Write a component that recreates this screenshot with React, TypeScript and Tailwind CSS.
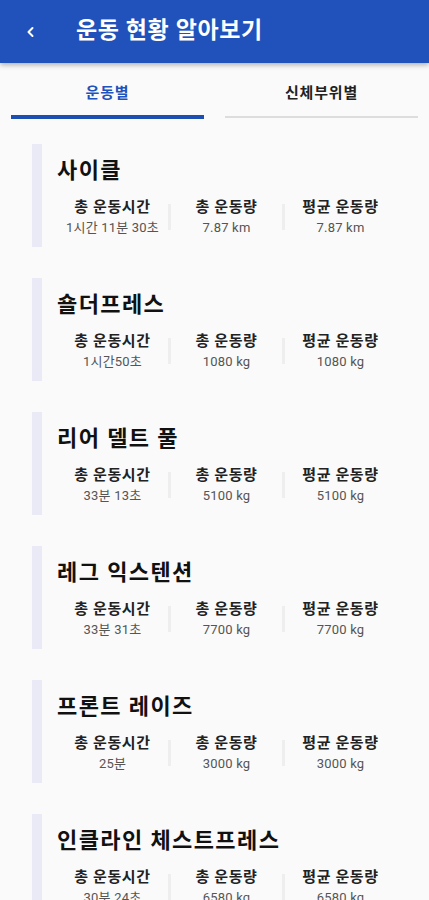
import React, { useState } from 'react';

type Exercise = {
  name: string;
  time: string;
  total: string;
  avg: string;
};

const exercises: Exercise[] = [
  { name: '사이클', time: '1시간 11분 30초', total: '7.87 km', avg: '7.87 km' },
  { name: '숄더프레스', time: '1시간50초', total: '1080 kg', avg: '1080 kg' },
  { name: '리어 델트 풀', time: '33분 13초', total: '5100 kg', avg: '5100 kg' },
  { name: '레그 익스텐션', time: '33분 31초', total: '7700 kg', avg: '7700 kg' },
  { name: '프론트 레이즈', time: '25분', total: '3000 kg', avg: '3000 kg' },
  { name: '인클라인 체스트프레스', time: '30분 24초', total: '6580 kg', avg: '6580 kg' },
];

const font = { fontFamily: 'Roboto, "Noto Sans CJK KR", "Noto Sans", sans-serif' };

const Stat = ({ label, value }: { label: string; value: string }) => (
  <div className="w-[111px] flex flex-col items-center">
    <p className="text-[15px] leading-[20px] font-bold tracking-[0.6px] text-[#222222] whitespace-nowrap">{label}</p>
    <p className="text-[13px] leading-[18px] mt-[2px] tracking-[0.2px] text-[#555555] whitespace-nowrap">{value}</p>
  </div>
);

const Divider = () => <div className="w-[3px] h-[26px] self-center bg-[#eeeeee]" />;

const ExerciseCard = ({ item }: { item: Exercise }) => (
  <div className="flex">
    <div className="w-[10px] bg-[#e9eaf6]" />
    <div className="pl-[15px] pt-[13px] pb-[10px]">
      <h2 className="text-[22px] leading-[28px] font-bold tracking-[1.4px] text-[#111111]">{item.name}</h2>
      <div className="flex mt-[12px]">
        <Stat label="총 운동시간" value={item.time} />
        <Divider />
        <Stat label="총 운동량" value={item.total} />
        <Divider />
        <Stat label="평균 운동량" value={item.avg} />
      </div>
    </div>
  </div>
);

export default function App() {
  const [tab, setTab] = useState(0);
  const tabs = ['운동별', '신체부위별'];

  return (
    <div className="min-h-[900px] w-[429px] bg-[#fafafa] overflow-hidden" style={font}>
      <header className="h-[63px] bg-[#2152bb] flex items-center shadow-[0_2px_5px_rgba(0,0,0,0.3)] relative z-10">
        <button className="w-[76px] pl-[25px] flex items-center text-white">
          <svg width="12" height="12" viewBox="0 0 24 24" fill="none" stroke="currentColor" strokeWidth="4" strokeLinecap="round" strokeLinejoin="round">
            <path d="M15 4l-8 8 8 8" />
          </svg>
        </button>
        <h1 className="text-[23px] font-bold tracking-[0.6px] text-white">운동 현황 알아보기</h1>
      </header>

      <nav className="flex gap-[21px] px-[11px] pt-[18px]">
        {tabs.map((t, i) => (
          <button key={t} onClick={() => setTab(i)} className="flex-1 flex flex-col items-center">
            <span className={`text-[15px] leading-[24px] font-bold tracking-[0.8px] ${tab === i ? 'text-[#2152bb]' : 'text-[#222222]'}`}>{t}</span>
            <span className={`w-full ${tab === i ? 'h-[4px] mt-[10px] bg-[#1d4fb3]' : 'h-[2px] mt-[11px] mb-[1px] bg-[#dddddd]'}`} />
          </button>
        ))}
      </nav>

      <main className="flex flex-col gap-[31px] pl-[32px] pt-[25px] pb-[20px]">
        {exercises.map((e) => (
          <ExerciseCard key={e.name} item={e} />
        ))}
      </main>
    </div>
  );
}
